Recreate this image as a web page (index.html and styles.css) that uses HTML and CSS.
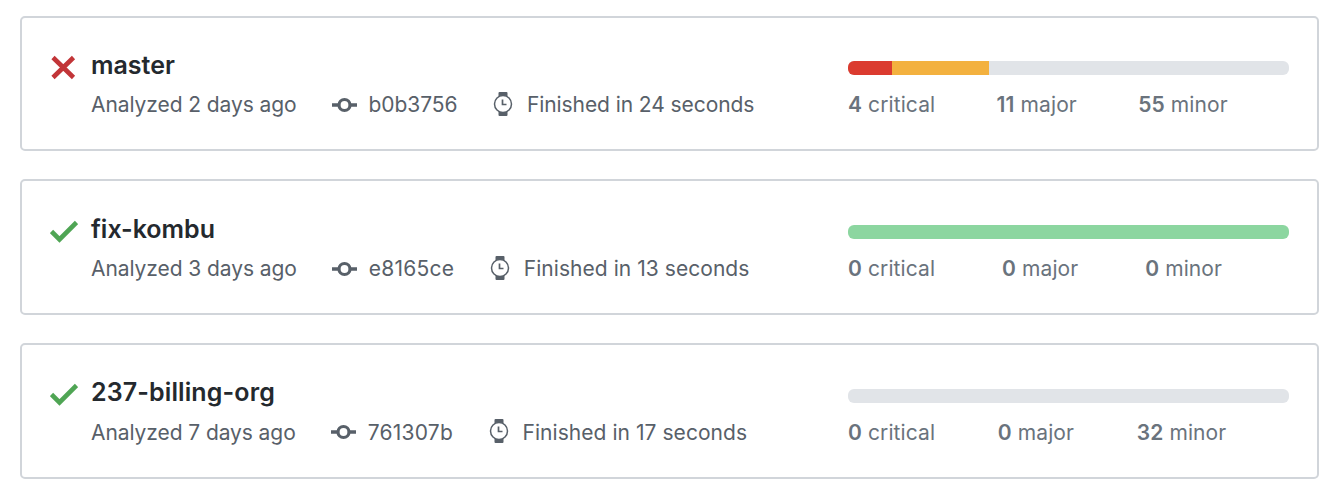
FILE: index.html
```
<!DOCTYPE html>
<html lang="en"><head><meta charset="utf-8"><title>Branches</title><link rel="stylesheet" href="styles.css"></head>
<body>
<svg class="defs" width="0" height="0"><defs>
<symbol id="x" viewBox="0 0 28 28"><path d="M3 3.500 23.500 23.500M23.500 3.500 3 23.500" fill="none" stroke="#c23538" stroke-width="4.600"/></symbol>
<symbol id="check" viewBox="0 0 28 28"><path d="M1.500 13.500 9.500 21.500 26.500 4.500" fill="none" stroke="#4fa554" stroke-width="4.600"/></symbol>
<symbol id="commit" viewBox="0 0 26 26"><path d="M0 13H7M19 13H25" stroke="#586069" stroke-width="3.400"/><circle cx="12.500" cy="13" r="5.500" fill="none" stroke="#586069" stroke-width="3.200"/></symbol>
<symbol id="watch" viewBox="0 0 20 28"><path d="M5.500 7V3Q5.500 2 6.500 2H13.500Q14.500 2 14.500 3V7M5.500 21V25Q5.500 26 6.500 26H13.500Q14.500 26 14.500 25V21" fill="#586069"/><circle cx="10" cy="14" r="8.500" fill="#fff" stroke="#586069" stroke-width="1.500"/><path d="M9.500 9.500V14.500H13.500" fill="none" stroke="#586069" stroke-width="1.700"/></symbol>
</defs></svg>
<main class="list">
<article class="card"><svg class="status"><use href="#x"/></svg><div class="info"><h2>master</h2><div class="meta"><span>Analyzed 2 days ago</span><svg class="commit"><use href="#commit"/></svg><span>b0b3756</span><svg class="watch"><use href="#watch"/></svg><span>Finished in 24 seconds</span></div></div><div class="issues"><div class="bar"><i class="critical" style="width:44px"></i><i class="major" style="width:97px"></i></div><div class="counts"><span><b>4</b> critical</span><span><b>11</b> major</span><span><b>55</b> minor</span></div></div></article>
<article class="card"><svg class="status"><use href="#check"/></svg><div class="info"><h2>fix-kombu</h2><div class="meta"><span>Analyzed 3 days ago</span><svg class="commit"><use href="#commit"/></svg><span class="hash-wide">e8165ce</span><svg class="watch"><use href="#watch"/></svg><span class="time-wide">Finished in 13 seconds</span></div></div><div class="issues"><div class="bar clean"></div><div class="counts"><span><b>0</b> critical</span><span><b>0</b> major</span><span><b>0</b> minor</span></div></div></article>
<article class="card"><svg class="status"><use href="#check"/></svg><div class="info"><h2 class="numeric">237-billing-org</h2><div class="meta"><span>Analyzed 7 days ago</span><svg class="commit"><use href="#commit"/></svg><span class="hash-wide">761307b</span><svg class="watch"><use href="#watch"/></svg><span class="time-wide">Finished in 17 seconds</span></div></div><div class="issues"><div class="bar"></div><div class="counts"><span><b>0</b> critical</span><span><b>0</b> major</span><span><b>32</b> minor</span></div></div></article>
</main></body></html>
```
FILE: styles.css
```
*{box-sizing:border-box}
body{margin:0;background:#fff;font-family:Inter,sans-serif;color:#586069}
.defs{display:none}
.list{padding:15.600px 21px 0 20px;display:grid;gap:28px}
.card{height:135.700px;border:2px solid #d1d5da;border-radius:5px;display:flex;padding:0 28px}
.status{width:28px;height:28px;margin-top:36.500px;flex:none}
.info{margin-left:13px;width:757px;flex:none}
h2{margin:31.400px 0 0;font-size:25px;line-height:32px;font-weight:600;color:#24292e}
.numeric{letter-spacing:.12px}
.meta{display:flex;align-items:center;height:28px;margin-top:10px;font-size:21px;letter-spacing:-.08px;white-space:nowrap}
.hash-wide{letter-spacing:.24px}
.time-wide{letter-spacing:.05px}
.commit{width:26px;height:26px;margin:0 11px 0 35px}
.watch{width:20px;height:28px;margin:-2px 14px 0 35.500px}
.issues{width:441px;flex:none;padding-top:43.700px}
.bar{height:14px;border-radius:6px;background:#e1e4e8;overflow:hidden;display:flex}
.critical{background:#db3b2f}
.major{background:#f3b13f}
.bar.clean{background:#8cd6a0}
.counts{display:flex;justify-content:space-between;margin-top:16px;line-height:28px;font-size:21px;letter-spacing:.1px;color:#6a737d}
.counts::after{content:""}
b{font-weight:600}
```
